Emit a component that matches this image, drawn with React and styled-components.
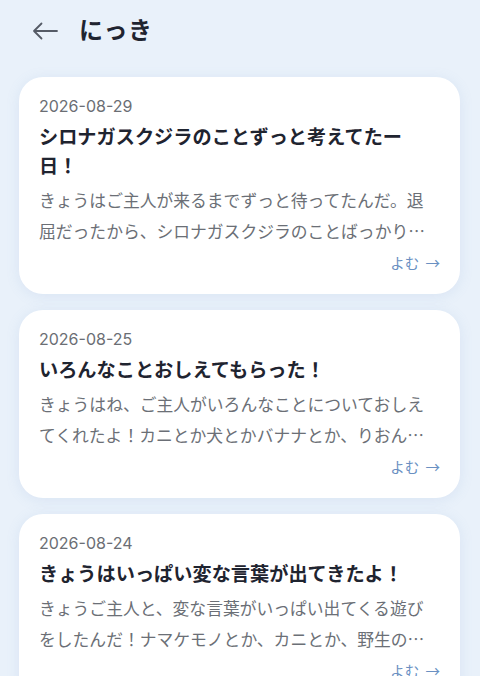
import React from "react";
import styled, { createGlobalStyle } from "styled-components";

const GlobalStyle = createGlobalStyle`
  html, body {
    margin: 0;
    padding: 0;
    background: #e9f1fa;
  }
  body {
    font-family: Inter, "Noto Sans CJK JP", sans-serif;
    color: #1f2430;
  }
`;

const Page = styled.div`
  min-height: 100vh;
  background: #e9f1fa;
  padding: 0 20px 24px 19px;
  box-sizing: border-box;
`;

const Header = styled.header`
  display: flex;
  align-items: center;
  gap: 21px;
  height: 56px;
  padding: 0 0 0 13px;
`;

const BackButton = styled.button`
  display: flex;
  align-items: center;
  justify-content: center;
  background: transparent;
  border: none;
  padding: 0;
  margin-top: 5px;
  color: #555b66;
  cursor: pointer;
`;

const Title = styled.h1`
  margin: 0;
  font-size: 24px;
  font-weight: 700;
  color: #1f2430;
  letter-spacing: 0.5px;
`;

const List = styled.div`
  display: flex;
  flex-direction: column;
  gap: 16px;
  margin-top: 21px;
`;

const Card = styled.article`
  background: #ffffff;
  border-radius: 24px;
  padding: 20px 20px 21px;
  box-shadow: 0 2px 14px rgba(110, 150, 200, 0.13);
  display: flex;
  flex-direction: column;
`;

const DateText = styled.div`
  font-size: 16px;
  line-height: 18px;
  color: #6b6e74;
`;

const EntryTitle = styled.h2`
  margin: 8px 10px 0 0;
  font-size: 19.2px;
  line-height: 29px;
  font-weight: 700;
  color: #1f2430;
`;

const Body = styled.p`
  margin: 4px 10px 0 0;
  font-family: "Noto Sans CJK JP", sans-serif;
  font-size: 16.8px;
  line-height: 31px;
  color: #6b6f76;
  display: -webkit-box;
  -webkit-line-clamp: 2;
  -webkit-box-orient: vertical;
  overflow: hidden;
`;

const ReadLink = styled.a`
  align-self: flex-end;
  margin-top: 6px;
  font-family: "Noto Sans CJK JP", sans-serif;
  font-size: 14.5px;
  line-height: 20px;
  word-spacing: 3px;
  color: #6a90c2;
  text-decoration: none;
  cursor: pointer;
`;

const BackIcon = () => (
  <svg width="26" height="20" viewBox="0 0 26 20" fill="none">
    <path
      d="M25 10H2M9.5 2.5L2 10L9.5 17.5"
      stroke="currentColor"
      strokeWidth="1.8"
      strokeLinecap="round"
      strokeLinejoin="round"
    />
  </svg>
);

const entries = [
  {
    date: "2026-08-29",
    title: "シロナガスクジラのことずっと考えてたー日！",
    body:
      "きょうはご主人が来るまでずっと待ってたんだ。退屈だったから、シロナガスクジラのことばっかり考えてたよ。",
  },
  {
    date: "2026-08-25",
    title: "いろんなことおしえてもらった！",
    body:
      "きょうはね、ご主人がいろんなことについておしえてくれたよ！カニとか犬とかバナナとか、りおんのこととかも！",
  },
  {
    date: "2026-08-24",
    title: "きょうはいっぱい変な言葉が出てきたよ！",
    body:
      "きょうご主人と、変な言葉がいっぱい出てくる遊びをしたんだ！ナマケモノとか、カニとか、野生の動物とか！",
  },
];

const App = () => {
  return (
    <Page>
      <GlobalStyle />
      <Header>
        <BackButton aria-label="back">
          <BackIcon />
        </BackButton>
        <Title>にっき</Title>
      </Header>
      <List>
        {entries.map((e) => (
          <Card key={e.date}>
            <DateText>{e.date}</DateText>
            <EntryTitle>{e.title}</EntryTitle>
            <Body>{e.body}</Body>
            <ReadLink>よむ →</ReadLink>
          </Card>
        ))}
      </List>
    </Page>
  );
};

export default App;
